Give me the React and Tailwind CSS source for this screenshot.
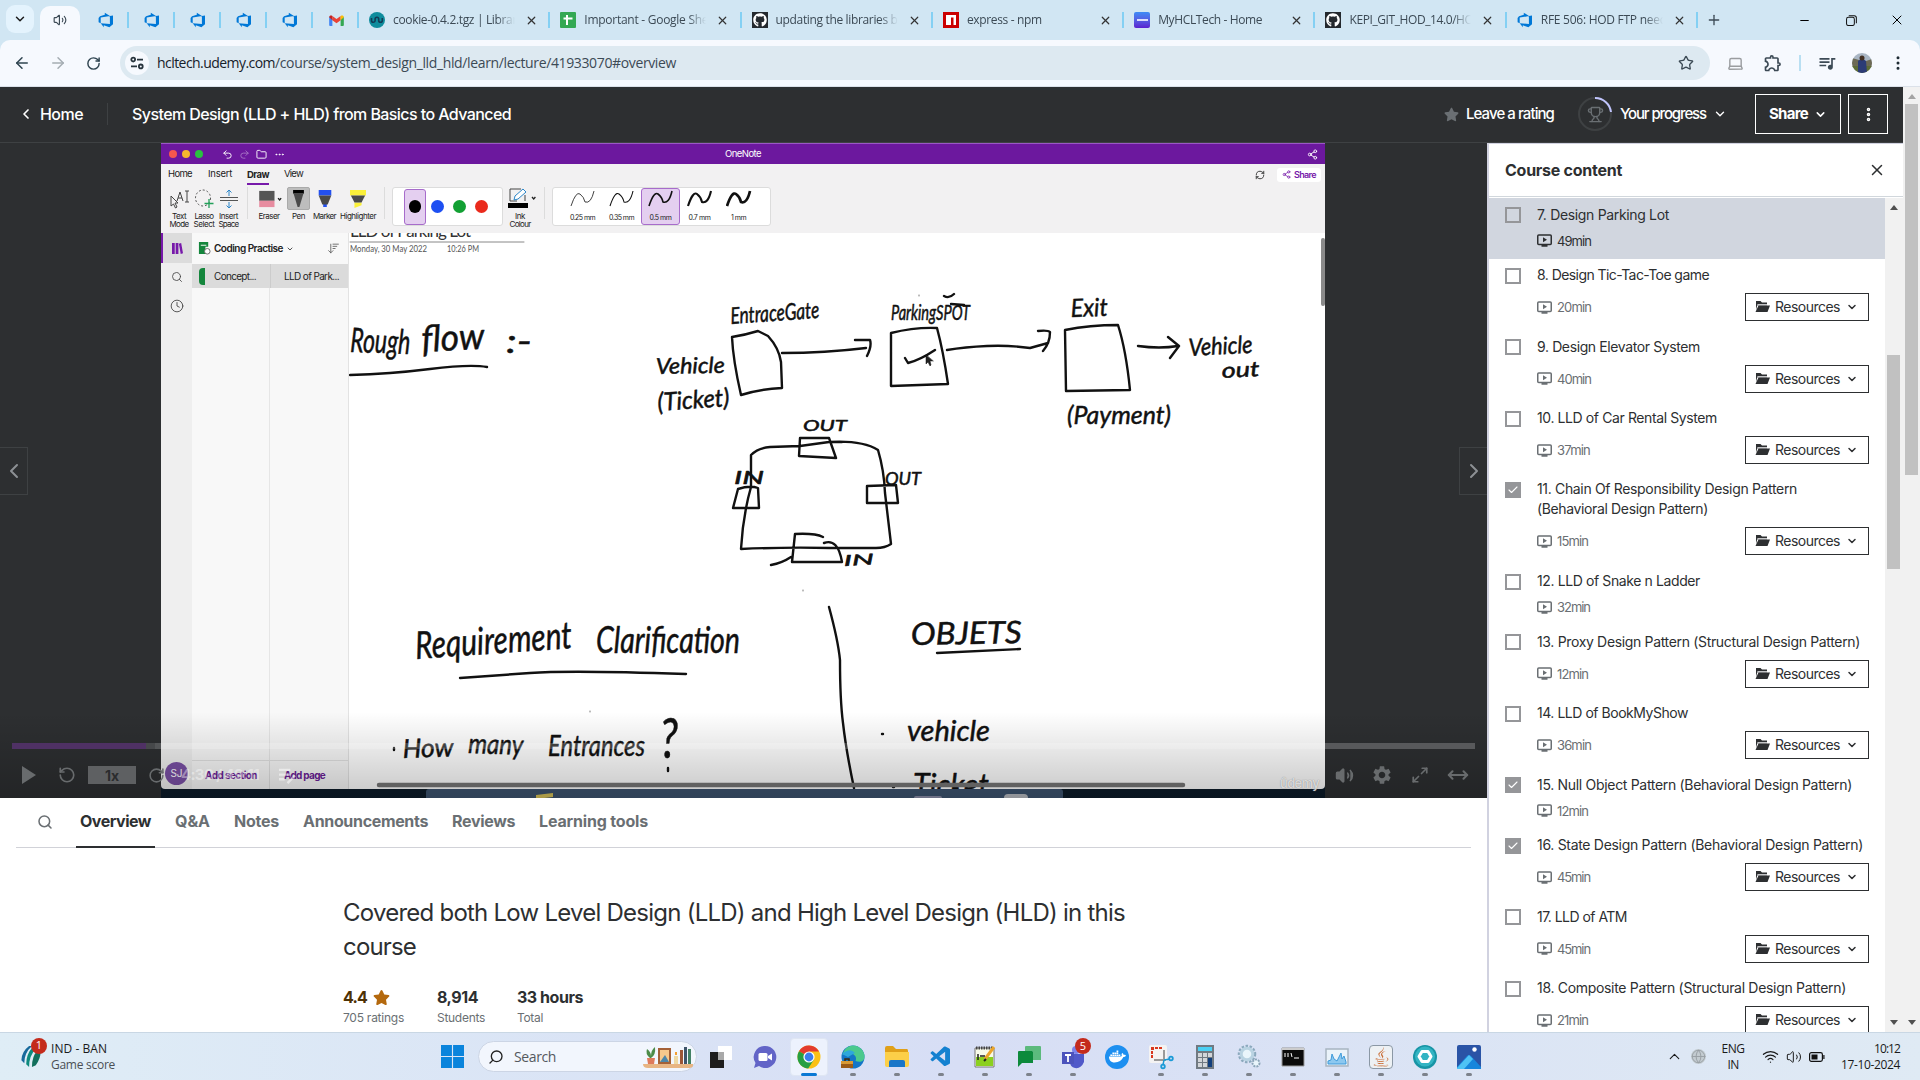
import React, { useLayoutEffect, useRef } from 'react';
import {
  ChevronDown, ChevronUp, ChevronLeft, ChevronRight, X, Plus, ArrowLeft, ArrowRight, RotateCw, Star, Laptop,
  EllipsisVertical, Volume2, Search, Trophy, Undo2, Redo2, Folder, Ellipsis, Clock, RefreshCw, Share2,
  ArrowDownWideNarrow, RotateCcw, Wifi, MoveHorizontal, Minus, Check, Globe, Maximize2,
} from 'lucide-react';
import { FaGithub, FaStar, FaDocker, FaJava } from 'react-icons/fa';
import { VscVscode } from 'react-icons/vsc';
import { MdOutlineExtension, MdQueueMusic, MdSettings } from 'react-icons/md';

/* Text spaced out or tightened to a given width. */
function T({ w, className = '', children }) {
  const ref = useRef(null);
  useLayoutEffect(() => {
    const el = ref.current;
    el.style.letterSpacing = '0px';
    const natural = el.getBoundingClientRect().width;
    el.style.letterSpacing = `${(w - natural) / String(children).length}px`;
  }, [w, children]);
  return <span ref={ref} className={`inline-block whitespace-nowrap ${className}`}>{children}</span>;
}

const DevOps = () => (
  <svg viewBox="0 0 16 16" className="size-4 shrink-0">
    <path fill="#0078d7" d="M15 3.6v8.7l-3.6 3-5.6-2v2L2.700 11.200l9.200.7V4zM12 4.100 6.800.7v2.100L2 4.200.600 6v4.300l2.100.9V5.600z" />
  </svg>
);
const Github = () => <span className="flex size-4 shrink-0 items-center justify-center bg-[#24292e]"><FaGithub className="size-[14px] text-white" /></span>;
const Gmail = () => (
  <svg viewBox="0 0 16 12" className="h-[11px] w-[15px]">
    <path fill="#4285f4" d="M0 2v9a1 1 0 0 0 1 1h2.500V4.500z" /><path fill="#34a853" d="M16 2v9a1 1 0 0 1-1 1h-2.500V4.500z" />
    <path fill="#ea4335" d="M3.500 1v4.700L8 9l4.500-3.300V1L8 4.400z" /><path fill="#c5221f" d="M0 2.500 3.500 5.700V1C2 0 0 .5 0 2.500z" /><path fill="#fbbc04" d="M16 2.500 12.500 5.700V1C14 0 16 .5 16 2.500z" />
  </svg>
);
const Sheet = () => (
  <svg viewBox="0 0 16 16" className="size-4 shrink-0"><rect width="16" height="16" rx="1" fill="#34a853" /><path d="M7 3v10M3.500 6.500h9" stroke="#fff" strokeWidth="2" /></svg>
);
const Npm = () => <svg viewBox="0 0 16 16" className="size-4 shrink-0"><path fill="#cb0000" d="M0 0h16v16H0z" /><path fill="#fff" d="M3 3h10v10h-2.500V5.500H8V13H3z" /></svg>;
const Whale = () => (
  <svg viewBox="0 0 16 16" className="size-4 shrink-0"><circle cx="8" cy="8" r="8" fill="#0e8c9c" /><path d="M2.500 6v2.500a1.800 1.800 0 0 0 3.600 0V7a1.800 1.800 0 0 1 3.600 0v1.500a1.800 1.800 0 0 0 3.600 0V6" stroke="#123b55" strokeWidth="1.600" fill="none" /></svg>
);
const Hcl = () => <span className="flex size-4 shrink-0 items-center justify-center rounded-[2px] bg-linear-to-b from-[#3b8bf5] to-[#5a1fd0]"><span className="h-[2px] w-[11px] bg-white/80" /></span>;

const tabs = [
  [Whale, 'cookie-0.4.2.tgz | Librar', 124],
  [Sheet, 'Important - Google She', 124],
  [Github, 'updating the libraries b', 122],
  [Npm, 'express - npm', 75],
  [Hcl, 'MyHCLTech - Home', 104],
  [Github, 'KEPI_GIT_HOD_14.0/HO', 124],
  [DevOps, 'RFE 506: HOD FTP need', 126],
];

function Browser() {
  return (
    <div className="h-[87px] bg-[#d1e6f3] font-['Open_Sans','Noto_Sans',sans-serif] text-[#3c4a55]">
      <div className="flex h-10 items-stretch">
        <div className="flex w-10 items-center pl-[6px] pb-0.5"><span className="flex size-7 items-center justify-center rounded-[9px] bg-[#e4f3fd]"><ChevronDown className="size-[14px] text-[#1c1c1c]" strokeWidth={2.500} /></span></div>
        <div className="mt-[6px] flex w-10 items-center justify-center rounded-t-[10px] bg-[#f6f9fe] pb-[6px]"><Volume2 className="size-[14px]" /></div>
        <div className="w-[3px]" />
        {[0, 1, 2, 3, 4, 5].map((i) => (
          <div key={i} className="flex w-[46px] items-center justify-center">
            <span className="flex w-[45px] justify-center pl-[2px]">{i < 5 ? <DevOps /> : <Gmail />}</span><span className="h-4 w-[2px] bg-[#84d0f3]" />
          </div>
        ))}
        {tabs.map(([Icon, label, w], i) => (
          <div key={i} className="flex w-[191.300px] items-center pl-[10px] text-[12px]">
            <Icon />
            <span className="ml-2 w-[122px] overflow-hidden mask-r-from-85%"><T w={w}>{label}</T></span>
            <X className="ml-[10px] size-[13px] text-[#333]" strokeWidth={2.200} />
            <span className="ml-auto h-4 w-[2px] bg-[#84d0f3]" />
          </div>
        ))}
        <div className="flex flex-1 items-center pl-[8px]"><Plus className="size-[16px]" />
          <Minus className="ml-[76px] size-[13px] text-black" strokeWidth={2} />
          <svg viewBox="0 0 12 12" className="ml-[35px] size-[11px]" fill="none" stroke="#111" strokeWidth="1.100"><rect x=".6" y="2.500" width="8.500" height="9" rx="2" /><path d="M3 .7h6q2.300 0 2.300 2.300v6" /></svg>
          <X className="ml-[32px] size-[16px] text-black" strokeWidth={1.500} />
        </div>
      </div>
      <div className="flex h-[47px] items-center rounded-t-[10px] border-b border-[#dbe1e9] bg-[#f6f9fe] pl-[13px]">
        <ArrowLeft className="size-[18px] text-[#2f4450]" /><ArrowRight className="ml-[18px] size-[18px] text-[#a5adb3]" /><RotateCw className="ml-[19px] size-[15px] text-[#2f4450]" strokeWidth={2.300} />
        <div className="ml-[19px] flex h-[34px] w-[1590px] items-center rounded-full bg-[#dde9f1] pl-[5px]">
          <span className="flex size-6 items-center justify-center rounded-full bg-[#f6f9fe]">
            <svg viewBox="0 0 14 14" className="size-[14px]" fill="none" stroke="#27343d" strokeWidth="1.800"><circle cx="3.200" cy="3.600" r="1.900" /><path d="M7 3.600h6M1 10.400h6" /><circle cx="10.800" cy="10.400" r="1.900" /></svg>
          </span>
          <span className="ml-[8px] pb-px text-[14px]"><T w={118} className="text-[#16212a]">hcltech.udemy.com</T><T w={401}>/course/system_design_lld_hld/learn/lecture/41933070#overview</T></span>
          <Star className="mr-[16px] ml-auto size-[16px]" />
        </div>
        <Laptop className="ml-[17px] size-[17px] text-[#9a9da0]" /><MdOutlineExtension className="ml-[19px] size-[20px]" /><span className="ml-[16px] h-4 w-[2px] bg-[#b9dff2]" />
        <MdQueueMusic className="ml-[16px] size-[20px]" />
        <svg viewBox="0 0 20 20" className="ml-[15px] size-5"><clipPath id="av"><circle cx="10" cy="10" r="10" /></clipPath><g clipPath="url(#av)"><path fill="#a9b6c4" d="M0 0h20v20H0z" /><path fill="#6d6a55" d="M0 5l7 2v7H0zM20 6l-6 2v6h6z" /><path fill="#5d6c35" d="M0 13h20v8H0z" /><path fill="#2c3c76" d="M6 8q4-4 8 0l1 12H6z" /><circle cx="10" cy="5" r="2.500" fill="#433023" /></g></svg>
        <EllipsisVertical className="ml-[17px] size-[18px] text-[#1e2b33]" />
      </div>
    </div>
  );
}

function CourseHeader() {
  return (
    <header className="flex h-14 w-full items-center border-b border-[#3e4143] bg-[#2d2f31] pb-px text-[16px] font-medium text-white">
      <ChevronLeft className="ml-[18px] size-4" strokeWidth={2.500} />
      <T w={43} className="ml-[6px]">Home</T>
      <span className="ml-6 h-[22px] w-px bg-[#3e4143]" />
      <T w={379} className="ml-6">System Design (LLD + HLD) from Basics to Advanced</T>
      <div className="ml-auto flex items-center pr-[15px] text-[15px]">
        <FaStar className="size-[15px] text-[#6a6f73]" />
        <T w={88} className="ml-[7px]">Leave a rating</T>
        <span className="relative ml-6 flex size-[34px] items-center justify-center">
          <svg viewBox="0 0 34 34" className="absolute inset-0" fill="none" strokeWidth="2"><circle cx="17" cy="17" r="16" stroke="#3e4143" /><path d="M17 1a16 16 0 0 1 16 14" stroke="#c0c4fc" /></svg>
          <Trophy className="size-[17px] text-[#6a6f73]" />
        </span>
        <T w={86} className="ml-2">Your progress</T>
        <ChevronDown className="ml-[7px] size-[14px]" strokeWidth={2.400} />
        <div className="ml-7 flex h-10 w-[86px] items-center border border-white pl-[13px] font-bold"><T w={39}>Share</T><ChevronDown className="ml-[6px] size-[13px]" strokeWidth={2.800} /></div>
        <div className="ml-[7px] flex h-10 w-10 items-center justify-center border border-white"><EllipsisVertical className="size-[17px]" strokeWidth={3} /></div>
      </div>
    </header>
  );
}

const Tool = ({ w, icon, a, b, on }) => (
  <div className={`flex shrink-0 flex-col items-center text-[8px] leading-[8px] ${w}`}>
    <div className={`flex h-[23px] items-center justify-center ${on ? 'w-[23px] rounded-[2px] border border-[#aaa] bg-[#bdbdbd]' : ''}`}>{icon}</div>
    <T w={a[1]} className="mt-[2px]">{a[0]}</T>{b && <T w={b[1]}>{b[0]}</T>}
  </div>
);
const Sep = () => <span className="block h-8 w-px shrink-0 bg-[#dcdcdc]" />;

function Ribbon() {
  return (
    <div className="h-[69px] bg-[#f2f1f2] text-[#222]">
      <div className="flex h-[21px] items-center text-[9.500px]">
        <span className="w-[39px] pl-[7px]"><T w={24}>Home</T></span>
        <span className="w-[39px] pl-[8px]"><T w={24}>Insert</T></span>
        <span className="flex h-[19px] w-[38px] items-center pl-[8px]"><span className="mt-[3px] flex h-[18px] items-center border-b-2 border-[#7719aa] font-bold"><T w={22}>Draw</T></span></span>
        <span className="pl-[7px]"><T w={19}>View</T></span>
        <RefreshCw className="ml-auto size-[10px]" />
        <span className="mr-[4px] ml-[12px] flex h-[14px] items-center gap-[3px] rounded-[3px] bg-white px-[5px] text-[9px] font-semibold text-[#7719aa]"><Share2 className="size-[9px]" /><T w={22}>Share</T></span>
      </div>
      <div className="flex items-start pt-[2px]">
        <Tool w="w-[26px] ml-[5px]" a={['Text', 14]} b={['Mode', 19]} icon={<svg viewBox="0 0 20 20" className="size-[20px]" fill="none" stroke="#444" strokeWidth="1"><path d="M2 7v10l2.500-2 2 4 1.500-1-2-4h3z" /><path d="M8 12 11 3l3 9M9 9h4M16 2h4M18 2v11M16 13h4" /></svg>} />
        <Tool w="w-[24px]" a={['Lasso', 19]} b={['Select', 21]} icon={<svg viewBox="0 0 20 20" className="size-[20px]" fill="none" stroke="#555"><ellipse cx="9" cy="9" rx="7.500" ry="8" strokeDasharray="2 2" /><path d="M15 10v9M10.500 14.500h9" stroke="#22a05a" strokeWidth="1.300" /></svg>} />
        <Tool w="w-[25px]" a={['Insert', 19]} b={['Space', 20]} icon={<svg viewBox="0 0 20 20" className="size-[20px]" fill="none" stroke="#555"><path d="M1 8.500h18M1 11.500h18" /><path d="M10 7V1M7.500 3.500 10 1l2.500 2.500M10 13v6M7.500 16.500 10 19l2.500-2.500" stroke="#2c86c9" /></svg>} />
        <span className="ml-[6px]"><Sep /></span>
        <Tool w="w-[34px] ml-[4px]" a={['Eraser', 21]} icon={<svg viewBox="0 0 28 20" className="ml-px h-[18px] w-[26px]"><path fill="#555" d="M2 1h17v11H2z" /><path fill="#e78ca0" d="M2 12h17v7H2z" /><path d="m23 9 1.700 2L26.400 9" stroke="#222" fill="none" strokeWidth="1.500" /></svg>} />
        <Tool w="w-[25px]" a={['Pen', 13]} on icon={<svg viewBox="0 0 14 20" className="h-[18px] w-[13px]"><path fill="#000" d="M1 0h12v4H1z" /><path fill="#4a4a4a" d="M1.500 4h11L8 19H6z" /></svg>} />
        <Tool w="w-[27px]" a={['Marker', 23]} icon={<svg viewBox="0 0 14 20" className="h-[18px] w-[14px]"><path fill="#2350f0" d="M0 0h14v6H0zM5 15h4v4H5z" /><path fill="#4a4a4a" d="M0 6h14l-4 10H4z" /></svg>} />
        <Tool w="w-[40px]" a={['Highlighter', 36]} icon={<svg viewBox="0 0 18 20" className="h-[18px] w-[16px]"><path fill="#fbf03a" d="M0 0h18v6H0zM5 14h8v3l-8 3z" /><path fill="#4a4a4a" d="M1 6h16l-4 8H5z" /></svg>} />
        <span className="ml-[6px]"><Sep /></span>
        <div className="ml-[7px] flex h-[39px] w-[111px] shrink-0 items-center rounded-[3px] border border-[#dcdcdc] bg-white pl-[11px]">
          <span className="flex h-[36px] w-[22px] items-center justify-center rounded-[3px] border border-[#a76ccb] bg-[#e4cff0]"><i className="size-[12.500px] rounded-full bg-black" /></span>
          <i className="ml-[5px] size-[12.500px] rounded-full bg-[#1d4ff2]" /><i className="ml-[9.500px] size-[12.500px] rounded-full bg-[#12a033]" /><i className="ml-[9.500px] size-[12.500px] rounded-full bg-[#ea2a1c]" />
        </div>
        <Tool w="w-[34px]" a={['Ink', 10]} b={['Colour', 21]} icon={<svg viewBox="0 0 30 22" className="ml-[4px] h-[22px] w-[30px]"><path fill="#000" d="M1 15h20v5H1z" /><path d="M14 1H3v12h7M18 7v6" stroke="#444" fill="none" /><path d="m7 12 1-4 8-7 3 3-8 7z" fill="#fff" stroke="#2c86c9" /><path d="m25 9 1.700 2L28.400 9" stroke="#222" fill="none" strokeWidth="1.300" /></svg>} />
        <span className="ml-[7px]"><Sep /></span>
        <div className="ml-[7px] flex h-[39px] w-[219px] shrink-0 items-center rounded-[3px] border border-[#dcdcdc] bg-white pl-[10px]">
          {[['0.25 mm', 25, 0.8], ['0.35 mm', 25, 1.100], ['0.5 mm', 22, 1.600], ['0.7 mm', 22, 2.100], ['1 mm', 15, 2.700]].map(([l, w, s], i) => (
            <span key={l} className={`flex h-[37px] w-[39px] flex-col items-center rounded-[3px] text-[7px] leading-none ${i === 2 ? 'border border-[#a76ccb] bg-[#e4cff0]' : ''}`}>
              <svg viewBox="0 0 26 20" className={i === 2 ? 'h-[20px] w-[26px]' : 'mt-px h-[20px] w-[26px]'} fill="none" stroke="#111" strokeWidth={s}><path d="M1 17Q6 2 10 5t5 8q6 2 9-11" /></svg>
              <T w={w} className="mt-[5px]">{l}</T>
            </span>
          ))}
        </div>
      </div>
    </div>
  );
}

/* word, x, baseline, width, size, slant of the line in degrees */
const ink = [
  ['Rough', 350, 352, 60, 34, 2], ['flow', 422, 352, 63, 37, -3], [':-', 506, 353, 26, 32, 0],
  ['EntraceGate', 731, 324, 89, 23, -4], ['ParkingSPOT', 891, 320, 79, 21, 0], ['Exit', 1071, 317, 37, 25, -2],
  ['Vehicle', 656, 374, 69, 22, -1], ['(Ticket)', 658, 411, 72, 25, -4], ['(Payment)', 1067, 424, 104, 26, 0],
  ['Vehicle', 1189, 356, 64, 24, -3], ['out', 1222, 378, 38, 21, -3], ['OUT', 803, 431, 44, 15, 0], ['IN', 734, 484, 30, 17, 0],
  ['OUT', 885, 485, 36, 17, 0], ['IN', 844, 566, 30, 15, -3], ['Requirement', 416, 659, 157, 38, -4], ['Clarification', 596, 653, 144, 36, 0],
  ['OBJETS', 911, 645, 111, 31, -1], ['How', 403, 758, 51, 26, -2], ['many', 468, 753, 55, 28, 2], ['Entrances', 548, 756, 97, 28, 0],
  ['?', 660, 758, 18, 56, 0], ['vehicle', 907, 741, 83, 28, 0], ['Ticket', 913, 797, 76, 32, 0],
];

function Board() {
  return (
    <svg viewBox="349 233 976 556" className="h-[556px] w-[976px] shrink-0 bg-white" fill="none" stroke="#111" strokeWidth="2.400" strokeLinecap="round" strokeLinejoin="round">
      <g stroke="none" fill="#333" className="font-['Lato',sans-serif]">
        <text x="350" y="237" fontSize="17" textLength="121">LLD of Parking Lot</text>
        <g fill="#555" fontSize="9"><text x="350" y="252" textLength="77" lengthAdjust="spacingAndGlyphs">Monday, 30 May 2022</text><text x="447" y="252" textLength="32" lengthAdjust="spacingAndGlyphs">10:26 PM</text></g>
      </g>
      <path d="M350 242H524" stroke="#888" strokeWidth="1" />
      <path d="M350 375Q390 374 430 369T487 367M732 337Q745 335 758 331L768 336Q779 348 781 362L782 388Q760 389 741 395Q733 360 732 337M782 353Q825 353 866 348M855 340 870 340Q872 346 867 356M891 333Q915 327 937 328Q943 350 948 384L891 386ZM905 358 908 363Q920 360 935 350M947 350Q965 347 987 346T1030 348L1048 343M1038 331Q1048 330 1050 332 1050 343 1043 351M1065 330Q1090 325 1118 325 1126 350 1130 390L1066 391ZM1138 346Q1160 349 1178 346M1168 337 1179 346 1170 358" />
      <path d="M741 549Q743 515 751 487L751 455Q758 448 770 447L800 446 829 442Q862 440 878 450 884 470 885 493L891 544Q885 548 876 548H830Q785 547 741 549M800 438H829L836 458 799 456ZM738 489Q750 485 758 488L759 508H733ZM867 486 896 485 898 503H867ZM795 534Q815 533 823 537M824 543Q838 538 842 562L792 562 795 534M771 565Q782 563 791 557M835 442H842" />
      <path d="M460 678Q490 676 530 673T686 674M829 607Q838 640 840 660 840 700 843 723 846 750 854 788M937 653 1020 649" />
      <path d="M944 296q5 3 10-2M951 304l13 1M394 748v2M882 734h1M893 787h1M668 768v3" />
      <path d="M926 355v9l2-2 2 4 1-1-1-4h3z" fill="#222" strokeWidth=".5" />
      <g strokeWidth=".5" fill="#111" className="font-['Lato',sans-serif] italic">
        {ink.map(([t, x, y, w, s, r]) => <text key={`${t}${x}`} x={x} y={y} fontSize={s} textLength={w} lengthAdjust="spacingAndGlyphs" transform={`rotate(${r} ${x} ${y})`}>{t}</text>)}
      </g>
      <path d="M803 590v1M590 711v1M919 295v1" strokeWidth="1" stroke="#777" />
      <path d="M379 785H1183" stroke="#777" strokeWidth="4.500" />
      <path d="M1323 240V304" stroke="#8a8a8a" strokeWidth="4" />
    </svg>
  );
}

function OneNote() {
  return (
    <div className="h-[655px] w-[1164px] bg-[#0c1b29] font-['Inter',sans-serif]">
      <div className="flex h-[21px] items-center border-t border-[#9a57c4] bg-[#6c189e] text-white">
        <i className="ml-[8px] size-2 rounded-full bg-[#f5574e]" /><i className="ml-[5px] size-2 rounded-full bg-[#f8b72d]" /><i className="ml-[5px] size-2 rounded-full bg-[#29c33f]" />
        <Undo2 className="ml-[19px] size-[11px]" /><Redo2 className="ml-[6px] size-[11px] opacity-40" /><Folder className="ml-[6px] size-[11px]" /><Ellipsis className="ml-[7px] size-[11px]" />
        <span className="ml-[440px] text-[9.500px]"><T w={36}>OneNote</T></span>
        <Share2 className="mr-[7px] ml-auto size-[11px]" />
      </div>
      <Ribbon />
      <div className="flex h-[556px] overflow-hidden rounded-b-[4px]">
        <div className="flex w-[31px] shrink-0 flex-col items-center bg-[#efefef] text-[#444]">
          <div className="flex h-[30px] w-full items-center justify-center border-l-2 border-[#7719aa] bg-[#dcdcdc]"><svg viewBox="0 0 12 12" className="size-[11px]"><path fill="#7719aa" d="M0 0h3v12H0zM4 0h3v12H4zM7.500.8 10 0l2 11.300-2.500.7z" /></svg></div>
          <Search className="mt-[8px] size-[12px]" strokeWidth={1.700} /><Clock className="mt-[16px] size-[14px]" strokeWidth={1.500} />
          <span className="mt-auto mb-[4px] flex h-[23px] w-[23px] shrink-0 items-center justify-center rounded-full bg-[#7a50a5] text-[10px] text-white">SJ</span>
        </div>
        <div className="flex w-[157px] shrink-0 flex-col border-r border-[#e3e3e3] bg-[#f8f8f8]">
          <div className="flex h-[31px] items-center pl-[6px]">
            <svg viewBox="0 0 14 14" className="size-[13px]"><path fill="#14863c" d="M1 0h10v5H8v8H1z" /><path d="M3 3.500h6" stroke="#fff" /><circle cx="10" cy="10" r="3" fill="#fff" stroke="#666" /></svg>
            <span className="ml-[3px] text-[10px] font-semibold text-[#222]"><T w={69}>Coding Practise</T></span><ChevronDown className="ml-[3px] size-[8px]" /><ArrowDownWideNarrow className="mr-[8px] ml-auto size-[13px] text-[#555]" strokeWidth={1.500} />
          </div>
          <div className="flex h-6 items-center bg-[#dbdbdb] text-[10px] text-[#222]"><span className="ml-[7px] h-[17px] w-[6px] rounded-l-[4px] bg-[#14863c]" /><span className="w-[65px] pl-[9px]"><T w={42}>Concept...</T></span><span className="flex h-6 items-center border-l border-[#ccc] pl-[13px]"><T w={55}>LLD of Park...</T></span></div>
          <div className="flex flex-1"><div className="w-[78px] border-r border-[#e6e6e6]" /></div>
          <div className="flex h-[29px] items-center border-t border-[#e1e1e1] text-[10px] font-bold text-[#6b2096]"><span className="flex h-full w-[78px] items-center border-r border-[#e1e1e1] pl-[13px]"><T w={52}>Add section</T></span><T w={41} className="ml-[14px]">Add page</T></div>
        </div>
        <Board />
      </div>
      <div className="flex h-[9px] items-end overflow-hidden pl-[265px]"><div className="flex h-[9px] w-[637px] items-end rounded-t-[3px] bg-[#3d5470]"><i className="ml-[110px] h-[4px] w-[17px] -skew-y-6 bg-[#d9c45a]" /><i className="ml-[361px] h-[2px] w-7 rounded-t-full bg-[#8d90ab]" /><i className="ml-[62px] h-[4px] w-6 rounded-t-full bg-[#b9bcc2]" /></div></div>
    </div>
  );
}

function Player() {
  return (
    <section className="relative flex h-[655px] w-[1487px] justify-center overflow-hidden bg-[#2d2f31] pr-px">
      <OneNote />
      <div className="absolute inset-x-0 bottom-0 h-[86px] bg-linear-to-b from-transparent to-black/22" />
      <div className="absolute top-[304px] left-0 flex h-12 w-7 items-center justify-center border border-l-0 border-[#3e4143] text-[#8c9094]"><ChevronLeft className="size-6" /></div>
      <div className="absolute top-[304px] right-0 flex h-12 w-7 items-center justify-center border border-r-0 border-[#3e4143] text-[#8c9094]"><ChevronRight className="size-6" /></div>
      <div className="absolute bottom-[49px] left-3 flex h-[6px] w-[1463px]"><span className="w-[134px] bg-[#4f3164]" /><span className="w-[9px] bg-[#46484a]" /><span className="w-[1170px] bg-white/20" /><span className="flex-1 bg-[#58595b]" /></div>
      <div className="absolute bottom-0 left-0 flex h-[46px] w-full items-center text-[#686b6d]">
        <svg viewBox="0 0 14 18" className="ml-[22px] h-[18px] w-[14px]"><path fill="currentColor" d="M0 0v18l14-9z" /></svg>
        <RotateCcw className="ml-[22px] size-[18px]" strokeWidth={2.200} />
        <span className="ml-[12px] flex h-[18px] w-12 items-center justify-center bg-[#5e6062] text-[14px] font-bold text-[#2b2c2e]">1x</span>
        <RotateCw className="ml-[12px] size-[17px]" strokeWidth={2.200} />
        <T w={78} className="ml-[16px] text-[15px] font-bold text-white/40">4:30 / 49:11</T>
        <svg viewBox="0 0 18 18" className="ml-[20px] size-[17px] text-white/50" fill="none" stroke="currentColor" strokeWidth="2.500"><path d="M0 3h12M0 8h12M0 13h6M9 17l8-8" /></svg>
        <span className="mt-[16px] ml-auto text-[13px] leading-4 font-medium text-white/70 [text-shadow:0_0_1px_#777]"><T w={39}>ûdemy</T></span>
        <Volume2 className="ml-[16px] size-[19px] fill-current" /><MdSettings className="ml-[17px] size-[22px]" /><Maximize2 className="ml-[18px] size-[18px]" strokeWidth={2.300} /><MoveHorizontal className="mr-[18px] ml-[18px] size-[22px]" strokeWidth={2.300} />
      </div>
    </section>
  );
}

function Overview() {
  return (
    <section className="flex w-[1487px] flex-1 flex-col bg-white px-4">
      <nav className="flex h-[50px] items-stretch border-b border-[#d1d2d8] text-[16px] font-bold text-[#6a6f73]">
        <span className="flex w-[60px] items-center pb-[2px] pl-[21px]"><Search className="size-4" strokeWidth={2.300} /></span>
        <span className="relative flex w-[79px] items-center justify-center pb-[3px] text-[#2d2f31] after:absolute after:inset-x-0 after:-bottom-px after:h-[2px] after:bg-[#2d2f31]"><T w={71}>Overview</T></span>
        <span className="flex items-center gap-6 pb-[3px] pl-5"><T w={35}>Q&amp;A</T><T w={45}>Notes</T><T w={125}>Announcements</T><T w={63}>Reviews</T><T w={109}>Learning tools</T></span>
      </nav>
      <div className="mt-[48px] ml-[327px] text-[24px] leading-[34px] text-[#2d2f31]"><T w={782}>Covered both Low Level Design (LLD) and High Level Design (HLD) in this</T><br /><T w={73}>course</T></div>
      <div className="mt-[20px] ml-[327px] flex text-[16px] leading-[26px] font-bold text-[#2d2f31]">
        <div className="w-[94px]"><div className="flex items-center text-[#4d3105]"><T w={24}>4.4</T><FaStar className="ml-[6px] size-[17px] text-[#b4690e]" /></div><Sub w={61}>705 ratings</Sub></div>
        <div className="w-[80px]"><div><T w={41}>8,914</T></div><Sub w={48}>Students</Sub></div>
        <div><div><T w={66}>33 hours</T></div><Sub w={26}>Total</Sub></div>
      </div>
    </section>
  );
}
const Sub = ({ w, children }) => <div className="text-[12px] leading-[15px] font-normal text-[#6a6f73]"><T w={w}>{children}</T></div>;

const lessons = [
  { t: [['7. Design Parking Lot', 132]], m: '49min', mw: 34, active: true },
  { t: [['8. Design Tic-Tac-Toe game', 172]], m: '20min', mw: 34, r: true },
  { t: [['9. Design Elevator System', 163]], m: '40min', mw: 34, r: true },
  { t: [['10. LLD of Car Rental System', 180]], m: '37min', mw: 33, r: true },
  { t: [['11. Chain Of Responsibility Design Pattern', 260], ['(Behavioral Design Pattern)', 171]], m: '15min', mw: 31, r: true, done: true },
  { t: [['12. LLD of Snake n Ladder', 163]], m: '32min', mw: 33 },
  { t: [['13. Proxy Design Pattern (Structural Design Pattern)', 323]], m: '12min', mw: 31, r: true },
  { t: [['14. LLD of BookMyShow', 151]], m: '36min', mw: 34, r: true },
  { t: [['15. Null Object Pattern (Behavioral Design Pattern)', 315]], m: '12min', mw: 31, done: true },
  { t: [['16. State Design Pattern (Behavioral Design Pattern)', 326]], m: '45min', mw: 33, r: true, done: true },
  { t: [['17. LLD of ATM', 90]], m: '45min', mw: 33, r: true },
  { t: [['18. Composite Pattern (Structural Design Pattern)', 309]], m: '21min', mw: 31, r: true },
];

function Lesson({ l }) {
  const h = l.t.length > 1 ? 'h-[91.600px]' : l.r ? 'h-[71.400px]' : 'h-[60.800px]';
  return (
    <li className={`flex shrink-0 pl-4 text-[#2d2f31] ${h} ${l.active ? 'bg-[#d1d6df]' : ''}`}>
      <span className={`mt-[9px] flex size-4 shrink-0 items-center justify-center border-2 border-[#959699] ${l.done ? 'bg-[#959699]' : ''}`}>{l.done && <Check className="size-3 shrink-0 text-white" strokeWidth={2.200} />}</span>
      <div className="ml-4 flex-1 pt-[6.500px] text-[14px] leading-5">
        {l.t.map(([s, w]) => <div key={s}><T w={w}>{s}</T></div>)}
        <div className={`flex items-center ${l.r ? 'mt-[8px] h-7' : 'mt-[6px] h-5'} ${l.active ? '' : 'text-[#6a6f73]'}`}>
          <svg viewBox="0 0 15 13" className="h-[13px] w-[15px]"><rect x=".75" y="1" width="13.500" height="9.500" rx="1" fill="none" stroke="currentColor" strokeWidth="1.500" /><path fill="currentColor" d="M6 3.300v5l4-2.500zM4.500 11h6v1.700h-6z" /></svg>
          <T w={l.mw} className="ml-[5px] text-[13px]">{l.m}</T>
          {l.r && (
            <span className="mr-4 ml-auto flex h-7 w-[124px] items-center border border-[#2d2f31] pl-[9px] text-[#2d2f31]">
              <svg viewBox="0 0 15 12" className="h-[12px] w-[15px]"><path fill="#c4c5c7" d="M2 2h10v3H2z" /><path fill="#2d2f31" d="M0 0h5.500l1.500 1.500H12V3H2.500L1 9V0zM3.500 4.500H15L12.500 11H.5z" /></svg>
              <T w={65} className="ml-[5px]">Resources</T><ChevronDown className="ml-[6px] size-[12px]" strokeWidth={3} />
            </span>
          )}
        </div>
      </div>
    </li>
  );
}

const Tri = ({ up, c = '#505050' }) => <svg viewBox="0 0 8 5" className="h-[5px] w-[8px]"><path fill={c} d={up ? 'M0 5 4 0l4 5z' : 'M0 0l4 5 4-5z'} /></svg>;

function Sidebar() {
  return (
    <aside className="flex h-[889px] w-[416px] flex-col border-t border-l-2 border-[#d1d2e0] bg-white">
      <div className="flex h-[53px] items-center justify-between border-b border-[#d1d7dc] pr-[17px] pb-px pl-4 text-[16px] font-bold text-[#2d2f31]"><T w={117}>Course content</T><X className="size-[18px]" /></div>
      <div className="flex min-h-0 flex-1 overflow-hidden pt-px">
        <ul className="flex w-[396px] flex-col overflow-hidden">{lessons.map((l) => <Lesson key={l.t[0][0]} l={l} />)}</ul>
        <div className="flex flex-1 flex-col items-center bg-[#f1f1f1] pt-[7px] pr-px pb-[7px]"><Tri up /><span className="mt-[145px] mb-auto h-[214px] w-[13px] bg-[#c1c1c1]" /><Tri /></div>
      </div>
    </aside>
  );
}

/* Taskbar icons, each on a 24-unit grid */
const apps = [
  ['desk', <><path fill="#1d1d1d" d="M1 7h14v16H1z" /><path fill="#fff" d="M9 1h14v14H9z" /><path fill="#a9a9a9" d="M9 7h6v8H9z" /></>],
  ['chat', <><path fill="#6264c7" d="M12 1a11 11 0 1 1-6 20l-5 2 1.500-5A11 11 0 0 1 12 1z" /><rect x="5.500" y="8" width="9" height="8" rx="1.500" fill="#fff" /><path fill="#fff" d="m15 11 4-2.500v7L15 13z" /></>],
  ['chrome', <><circle cx="12" cy="12" r="11.500" fill="#fbc116" /><path fill="#e33b2e" d="M12 12 2 6.200a11.500 11.500 0 0 1 20 .3H12z" /><path fill="#269f42" d="M2 6.200a11.500 11.500 0 0 0 9.200 17.300L17 14.500 12 12z" /><circle cx="12" cy="12" r="5.600" fill="#fff" /><circle cx="12" cy="12" r="4.400" fill="#3b7ded" /></>],
  ['edge', <><circle cx="12" cy="12" r="11.500" fill="#1376c7" /><path fill="#4bc98d" d="M12 .5A11.500 11.500 0 0 1 23.500 12c0 4-4 6-9 4 3-6-6-11-13-6C3 4 7 .5 12 .5z" /><path fill="#2ea7dc" d="M1 9Q9 2 14 8L7 12z" /><path fill="#9b5b18" d="M0 16h12v7H0z" /><path fill="#d99a35" d="M0 16h12v3H0z" /><path d="M4 16v-2h4v2" stroke="#3d2a10" fill="none" strokeWidth="1.500" /></>],
  ['folder', <><path fill="#e0a018" d="M0 3q0-2 2-2h6l3 3h11q1 0 1 2v4H0z" /><path fill="#fccf48" d="M0 7h24v13q0 2-2 2H2q-2 0-2-2z" /><path fill="#1976c8" d="M4 17q0-2 2-2h12q2 0 2 2v5H4z" /></>],
  ['code', null],
  ['npp', <><path fill="#f8fbe8" stroke="#777" d="M2 3h19v19H2z" /><path fill="#8bd01f" d="M3 12h17v9H3z" /><path d="M3 3h17" stroke="#444" strokeWidth="3" strokeDasharray="1.500 1" /><path d="m12 14 9-12" stroke="#eba52a" strokeWidth="3" /><path d="m11 16 2-2" stroke="#222" strokeWidth="2" /><path d="M5 9v6M7 11h5" stroke="#222" strokeWidth="1.500" /></>],
  ['gchat', <><path fill="#5cba7d" d="M9 1h14q1 0 1 1v13h-8V6H8V2q0-1 1-1z" /><path fill="#0d8a3c" d="M2 6h13q1 0 1 1v11H5l-4 4V7q0-1 1-1z" /></>],
  ['teams', <><circle cx="15" cy="5" r="4" fill="#7b83eb" /><path fill="#5059c9" d="M9 9h14v8q-3 7-9 6-5-1-5-6z" /><path fill="#4b53bc" d="M1 7h12v12H1z" /><path d="M4 10h6M7 10v7" stroke="#fff" strokeWidth="1.800" /></>],
  ['docker', null],
  ['snip', <><rect width="18" height="18" rx="2" fill="#f4f3f3" /><path fill="#d9381e" d="M2 2h3v3H2zM6 2h3v2H6zM10 2h3v2h-3zM2 6h2v3H2zM2 10h2v3H2z" /><path d="M15 5v11M5 15h12" stroke="#9a9a9a" strokeWidth="2" /><path d="m15 15 6-1M15 15l-1 5" stroke="#1a9ad6" strokeWidth="1.500" /><circle cx="22" cy="13.500" r="1.800" stroke="#1a9ad6" strokeWidth="1.800" /><circle cx="14" cy="21.500" r="1.800" stroke="#1a9ad6" strokeWidth="1.800" /></>],
  ['calc', <><path fill="#717a82" d="M3 0h18v24H3z" /><path fill="#4cd0f4" d="M5 2h14v4H5z" /><path fill="#d3d6d9" d="M5 8h4v4H5zM10 8h4v4h-4zM15 8h4v4h-4zM5 13h4v4H5zM10 13h4v4h-4zM5 18h4v4H5zM10 18h4v4h-4z" /><path fill="#123f7c" d="M15 13h4v9h-4z" /></>],
  ['gear', <><circle cx="10" cy="9" r="8" stroke="#8ba9bd" strokeWidth="2.500" strokeDasharray="2.500 1.500" /><circle cx="10" cy="9" r="5.800" stroke="#b9d3e2" strokeWidth="3" fill="#e9f5fb" /><circle cx="19" cy="18" r="3.500" stroke="#8aa4b8" strokeWidth="2" fill="#e9f5fb" strokeDasharray="2 1" /></>],
  ['cmd', <><path fill="#0b0b0b" stroke="#999" d="M1 3h22v18H1z" /><path fill="#ccc" d="M1 3h22v2H1z" /><path d="M4 8v4M7 8v4M10 8l1 4M13 13h5" stroke="#fff" strokeWidth="1" /></>],
  ['perf', <><path fill="#eaf3fa" stroke="#a8b5c1" strokeWidth="1.500" d="M1 4h22v17H1z" /><path fill="#8cc8ef" stroke="#3f9bda" d="M3 19v-3l3-1 1-6 2 5 3 2 4-8 1 6 2-3 2 6v2z" /></>],
  ['java', null],
  ['hex', <><circle cx="12" cy="12" r="12" fill="#1794a5" /><circle cx="12" cy="11.500" r="10" fill="#32b4c3" /><path fill="none" stroke="#fff" strokeWidth="3" strokeLinejoin="round" d="M9 6.500h6l3 5-3 5H9l-3-5z" /></>],
  ['photo', <><rect width="24" height="24" rx="2" fill="#2a54a6" /><path fill="#1686dc" d="M0 22 10 11q2-2 4 0l10 11v2H0z" /><path fill="#4fc3f5" d="M0 23 12 10l4 4L7 24H0z" /><circle cx="17.500" cy="4.500" r="2.200" fill="#fff" /></>],
];

function Taskbar() {
  return (
    <footer className="flex h-12 items-center border-t border-[#c9d7e4] bg-linear-to-r from-[#dfedf6] via-[#d7def5] to-[#dfeaf4] font-['Open_Sans','Noto_Sans',sans-serif] text-[12px] text-[#1a1a1a]">
      <div className="relative ml-[21px] h-9 w-[26px]">
        <svg viewBox="0 0 20 26" className="absolute top-[5px] left-0 h-[25px] w-5"><path fill="#17699b" d="M8 2q-8 6-8 15l3 3Q3 9 11 2z" /><path fill="#0e8a7d" d="M12 3Q5 10 5 21l3 3Q8 12 15 5z" /><path fill="#126f5c" d="M17 7q-6 5-6 17l4-2q5-7 5-14z" /></svg>
        <span className="absolute -top-px right-0 flex size-4 items-center justify-center rounded-full bg-[#c42b1c] text-[11px] text-white">1</span>
      </div>
      <div className="ml-[4px] w-[390px] leading-4"><div><T w={56}>IND - BAN</T></div><div className="text-[#4a4f55]"><T w={64}>Game score</T></div></div>
      <svg viewBox="0 0 24 24" className="size-[23px]"><path fill="#0a84dc" d="M0 0h11.400v11.400H0zM12.600 0H24v11.400H12.600zM0 12.600h11.400V24H0zM12.600 12.600H24V24H12.600z" /></svg>
      <div className="ml-[14px] flex h-[31px] w-[219px] items-center rounded-full border border-[#ccd5e5] bg-[#f2f6fd] pl-[9px] text-[14px] text-[#55595e]">
        <Search className="size-[16px] -scale-x-100 text-[#222]" /><T w={42} className="ml-[10px]">Search</T>
        <svg viewBox="0 0 50 22" className="mr-[3px] ml-auto h-[22px] w-[50px]"><path fill="#e8b583" d="M0 18h50v2q-1 2-5 2H5q-5 0-5-4z" /><path fill="#de7a5b" d="M4 12h8l-1 6H5z" /><path fill="#4c8b48" d="M7 12Q2 8 4 3q4 3 4 7 0-6 4-9 1 8-4 11z" /><path fill="#a46137" d="M15 2h13v16H15z" /><path fill="#f7c98c" d="M17 4h9v12h-9z" /><path fill="#4d86a8" d="m17 16 5-7 4 7z" /><path fill="#eed9a4" d="M31 10h4v8h-4z" /><path fill="#f29f33" d="M32 6h2v3h-2z" /><path fill="#9c5637" d="M37 4h3v14h-3z" /><path fill="#40556a" d="M41 1h3v17h-3z" /><path fill="#448265" d="M45 3h3v15h-3z" /></svg>
      </div>
      <div className="ml-[2px] flex h-full items-center">
        {apps.map(([id, art]) => (
          <div key={id} className="relative flex h-full w-[44px] items-center justify-center">
            <div className={`flex h-[38px] w-[38px] items-center justify-center rounded-[4px] ${id === 'chrome' ? 'border border-[#dfe6f3] bg-[#edf2fd]' : ''}`}>
              {art && <svg viewBox="0 0 24 24" className="size-6 overflow-visible" fill="none">{art}</svg>}
              {id === 'code' && <VscVscode className="size-6 text-[#1481d0]" />}
              {id === 'docker' && <span className="flex size-6 items-center justify-center rounded-full bg-[#1d8ff0]"><FaDocker className="size-[17px] text-white" /></span>}
              {id === 'java' && <span className="flex size-6 items-center justify-center rounded-[4px] border border-[#8b98a5] bg-[#edf1f4]"><FaJava className="size-[20px] text-[#c8672c]" /></span>}
            </div>
            {!['desk', 'chat', 'docker'].includes(id) && <span className={`absolute bottom-[4px] h-[3px] rounded-full ${id === 'chrome' ? 'w-4 bg-[#0a78d4]' : 'w-[6px] bg-[#7d828b]'}`} />}
            {id === 'teams' && <span className="absolute top-[5px] right-[4px] flex size-4 items-center justify-center rounded-full bg-[#c42b1c] text-[11px] text-white">5</span>}
          </div>
        ))}
      </div>
      <ChevronUp className="ml-[175px] size-[17px]" strokeWidth={1.600} />
      <Globe className="ml-[8px] size-[15px] rounded-full bg-[#c3cbd0] text-[#999fa4]" strokeWidth={1.500} />
      <div className="ml-[12px] flex w-[30px] flex-col items-center leading-4"><T w={23}>ENG</T><T w={11}>IN</T></div>
      <Wifi className="ml-[14px] size-[17px]" strokeWidth={1.700} /><Volume2 className="ml-[7px] size-[16px]" strokeWidth={1.500} />
      <svg viewBox="0 0 16 10" className="ml-[7px] h-[10px] w-4"><rect x=".6" y=".6" width="12.800" height="8.800" rx="1.800" fill="none" stroke="#111" strokeWidth="1.200" /><path fill="#111" d="M2.500 2.500h6v5h-6zM14.300 3h1.200v4h-1.200z" /></svg>
      <div className="ml-auto pr-5 text-right leading-4"><div><T w={26}>10:12</T></div><div><T w={59}>17-10-2024</T></div></div>
    </footer>
  );
}

export default function App() {
  return (
    <div className="flex h-[1080px] w-[1920px] flex-col overflow-hidden bg-white font-['Inter',sans-serif]">
      <Browser />
      <div className="flex h-[945px]">
        <div className="flex w-[1903px] flex-col">
          <CourseHeader />
          <div className="flex h-[889px]">
            <div className="flex w-[1487px] flex-col"><Player /><Overview /></div>
            <Sidebar />
          </div>
        </div>
        <div className="flex w-[17px] flex-col items-center bg-[#f1f1f1] pt-[7px] pb-[7px]"><Tri up c="#a3a3a3" /><span className="mt-[5px] mb-auto h-[371px] w-[13px] bg-[#c1c1c1]" /><Tri /></div>
      </div>
      <Taskbar />
    </div>
  );
}
